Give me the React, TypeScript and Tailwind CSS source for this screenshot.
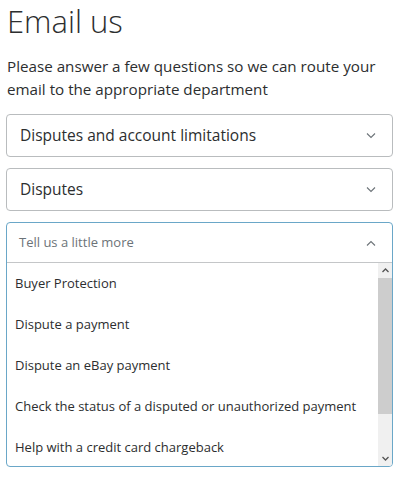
const options = [
  'Buyer Protection',
  'Dispute a payment',
  'Dispute an eBay payment',
  'Check the status of a disputed or unauthorized payment',
  'Help with a credit card chargeback',
]

function Chevron({ up = false }: { up?: boolean }) {
  return (
    <svg width="10" height="6" viewBox="0 0 10 6" className="shrink-0">
      <path
        d={up ? 'M1 5.5 L5 1.5 L9 5.5' : 'M1 0.5 L5 4.5 L9 0.5'}
        fill="none"
        stroke="#6c7378"
        strokeWidth="1.1"
      />
    </svg>
  )
}

function SelectBox({ label }: { label: string }) {
  return (
    <div className="flex h-[43px] items-center justify-between rounded-[4px] border border-[#b9bcbe] bg-white pl-[13px] pr-[16px]">
      <span className="text-[15.5px] text-[#2c2e2f]">{label}</span>
      <Chevron />
    </div>
  )
}

export default function App() {
  return (
    <div className="min-h-[480px] bg-white px-[6px] text-[#2c2e2f]" style={{ fontFamily: '"Open Sans", sans-serif' }}>
      <h1 className="pt-[1px] pl-[1px] text-[31px] font-light leading-[40px] text-[#2c2e2f]">Email us</h1>
      <p className="mt-[14px] pl-[1px] text-[15.2px] leading-[23px] text-[#2c2e2f]">
        Please answer a few questions so we can route your email to the appropriate department
      </p>
      <div className="mt-[13px] flex flex-col gap-[11px] pr-[7px]">
        <SelectBox label="Disputes and account limitations" />
        <SelectBox label="Disputes" />
        <div className="overflow-hidden rounded-[4px] border border-[#6aa7c8] bg-white">
          <div className="flex h-[40px] items-center justify-between border-b border-[#c4c6c8] pl-[12px] pr-[16px]">
            <span className="text-[13px] text-[#6c7378]">Tell us a little more</span>
            <Chevron up />
          </div>
          <div className="flex h-[203px]">
            <ul className="flex-1">
              {options.map((o) => (
                <li key={o} className="flex h-[41px] items-center pl-[8px] text-[13px] text-[#2c2e2f]">
                  {o}
                </li>
              ))}
            </ul>
            <div className="flex w-[14px] flex-col bg-[#f0f0f0]">
              <div className="flex h-[15px] items-center justify-center text-[#444]">
                <svg width="7" height="5" viewBox="0 0 7 5">
                  <path d="M0.5 4 L3.5 1 L6.5 4" fill="none" stroke="#555" strokeWidth="1.3" />
                </svg>
              </div>
              <div className="h-[136px] bg-[#cdcdcd]" />
              <div className="flex-1" />
              <div className="flex h-[15px] items-center justify-center">
                <svg width="7" height="5" viewBox="0 0 7 5">
                  <path d="M0.5 1 L3.5 4 L6.5 1" fill="none" stroke="#555" strokeWidth="1.3" />
                </svg>
              </div>
            </div>
          </div>
        </div>
      </div>
    </div>
  )
}
